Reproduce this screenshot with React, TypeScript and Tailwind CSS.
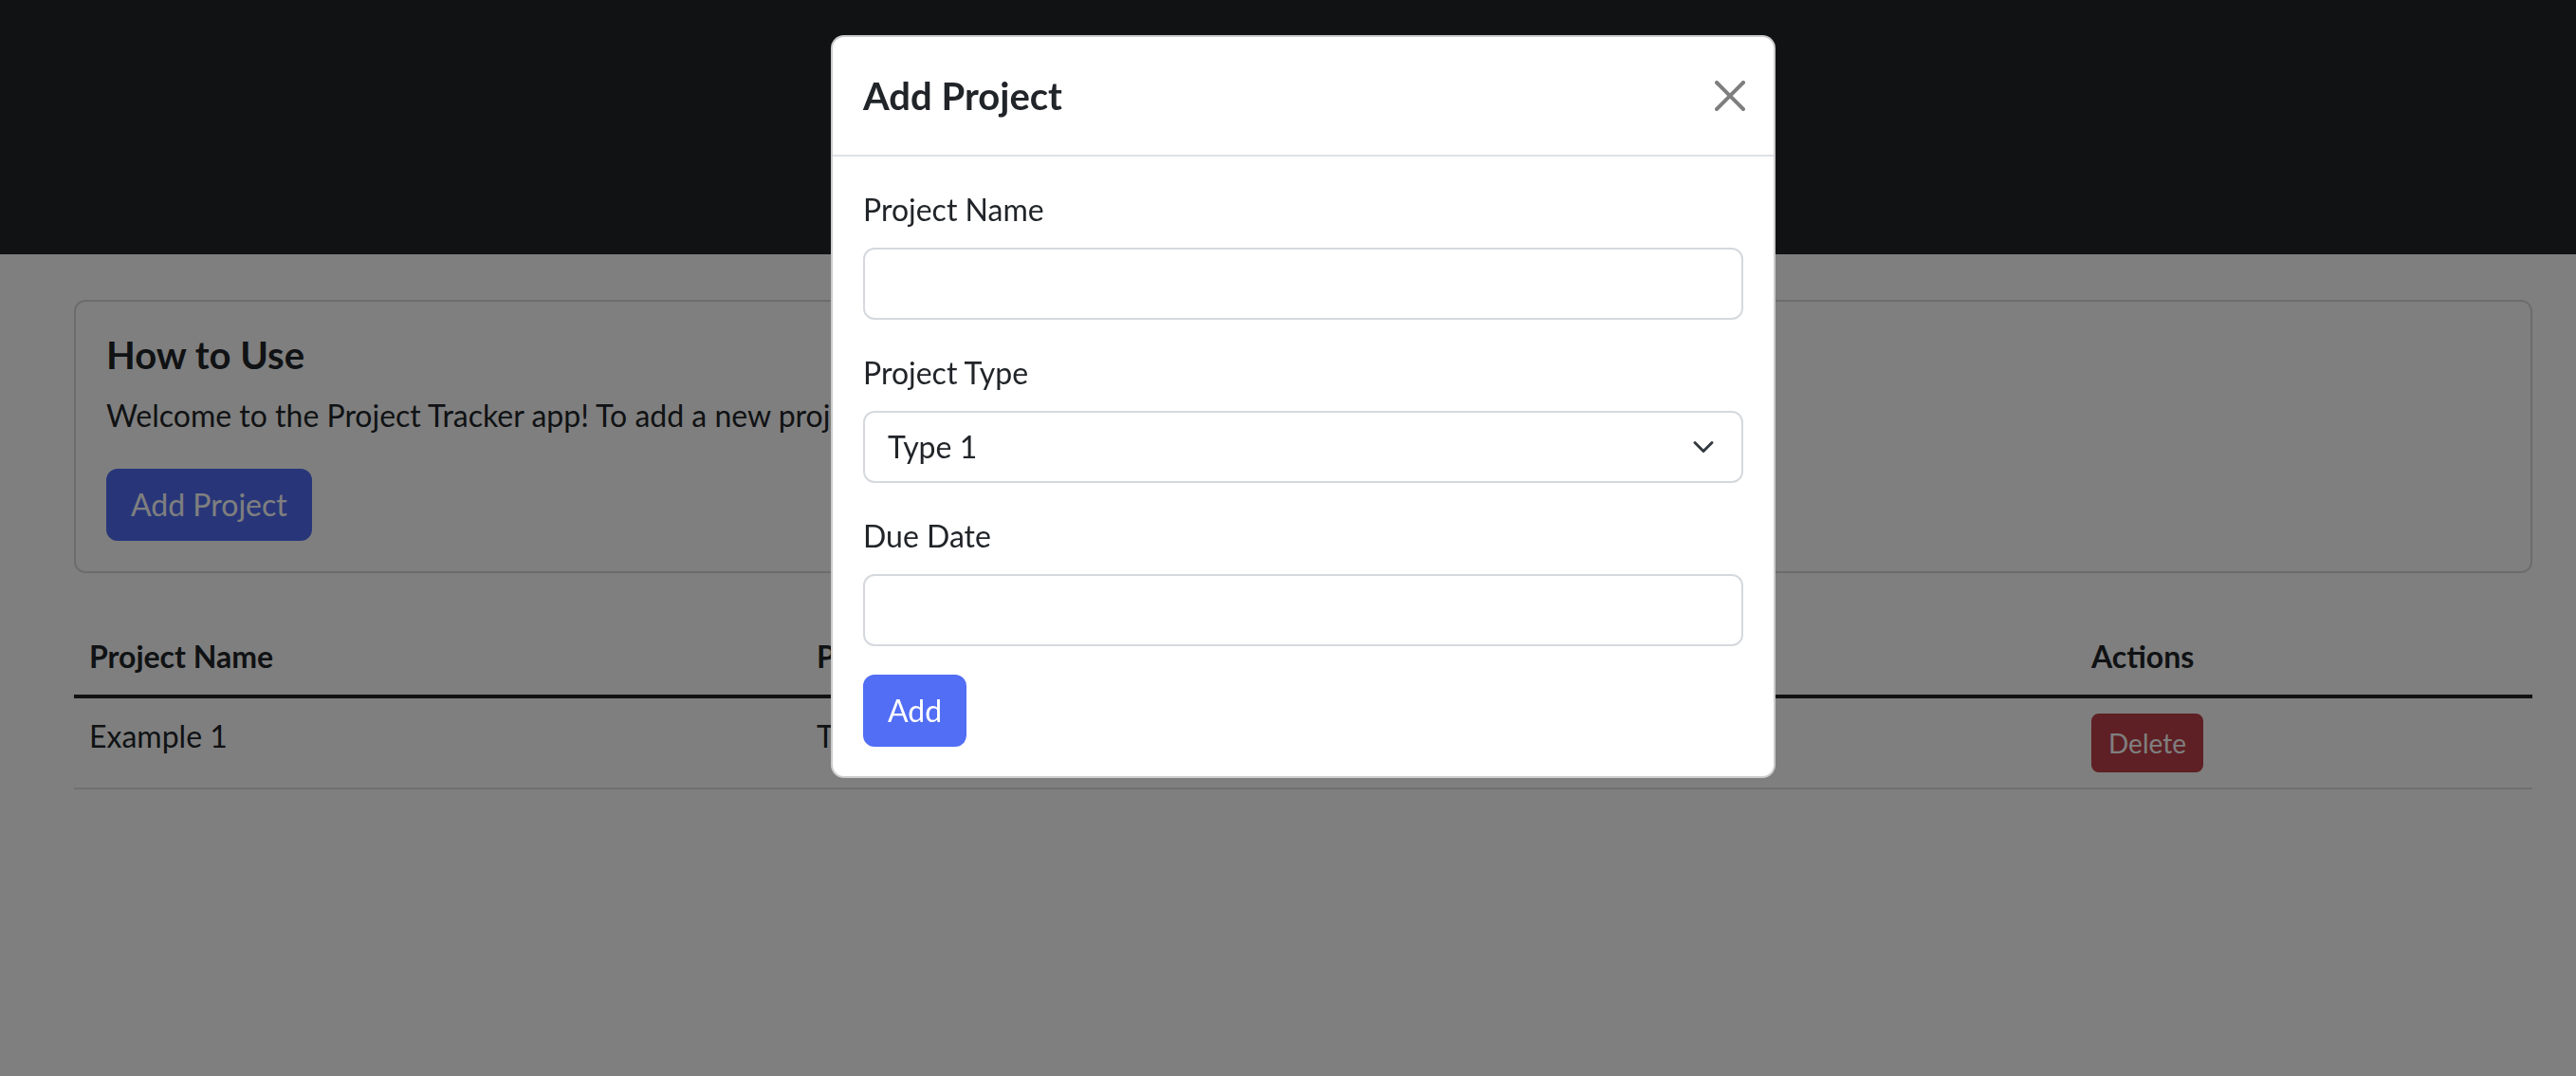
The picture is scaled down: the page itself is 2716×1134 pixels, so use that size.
// Project Tracker page with the "Add Project" modal open over a dimmed backdrop.

const FONT = { fontFamily: "Lato, 'Open Sans', sans-serif" };

const projects = [{ name: "Example 1", type: "Type 1", due: "2024-01-01" }];

function CloseIcon() {
  return (
    <svg width="32" height="32" viewBox="0 0 16 16" className="opacity-50">
      <path
        fill="#000"
        d="M.293.293a1 1 0 0 1 1.414 0L8 6.586 14.293.293a1 1 0 1 1 1.414 1.414L9.414 8l6.293 6.293a1 1 0 0 1-1.414 1.414L8 9.414l-6.293 6.293a1 1 0 0 1-1.414-1.414L6.586 8 .293 1.707a1 1 0 0 1 0-1.414z"
      />
    </svg>
  );
}

function Chevron() {
  return (
    <svg width="32" height="24" viewBox="0 0 16 16">
      <path
        d="m2 5 6 6 6-6"
        fill="none"
        stroke="#343a40"
        strokeWidth="2"
        strokeLinecap="round"
        strokeLinejoin="round"
      />
    </svg>
  );
}

function Field({ label, children }: { label: string; children: React.ReactNode }) {
  return (
    <div className="mb-[32px]">
      <label className="block text-[32px] leading-[48px] mb-[16px]">{label}</label>
      {children}
    </div>
  );
}

function AddProjectModal() {
  return (
    <div className="fixed inset-0 pl-[32px]">
      <div className="mx-auto mt-[37px] w-[996px] rounded-[14px] border-2 border-black/20 bg-white">
        {/* Header */}
        <div className="flex items-center justify-between px-[32px] py-[32px] border-b-2 border-[#dee2e6]">
          <h2 className="text-[40px] leading-[60px] font-bold">Add Project</h2>
          <button className="mr-[-2px]">
            <CloseIcon />
          </button>
        </div>

        {/* Body */}
        <div className="px-[32px] pt-[32px] pb-[31px]">
          <Field label="Project Name">
            <div className="h-[76px] w-full rounded-[12px] border-2 border-[#d5d9de]" />
          </Field>
          <Field label="Project Type">
            <div className="flex h-[76px] w-full items-center justify-between rounded-[12px] border-2 border-[#d5d9de] pl-[24px] pr-[24px]">
              <span className="text-[32px] leading-[48px]">Type 1</span>
              <Chevron />
            </div>
          </Field>
          <Field label="Due Date">
            <div className="h-[76px] w-full rounded-[12px] border-2 border-[#d5d9de]" />
          </Field>
          <button className="-mt-[2px] h-[76px] rounded-[12px] border-2 border-[#526ef4] bg-[#526ef4] px-[24px] text-[32px] leading-[48px] text-white">
            Add
          </button>
        </div>
      </div>
    </div>
  );
}

export default function App() {
  return (
    <div className="relative min-h-screen bg-white text-[#212529]" style={FONT}>
      <header className="flex h-[268px] items-center justify-center bg-[#222529] pl-[32px]">
        <h1 className="text-[48px] font-medium text-white">Project Tracker</h1>
      </header>

      <main className="pl-[32px]">
        <div className="mx-auto w-[2592px] pt-[48px]">
          {/* How to use card */}
          <div className="rounded-[12px] border-2 border-black/15 p-[32px]">
            <h5 className="mb-[16px] text-[40px] leading-[48px] font-bold">How to Use</h5>
            <p className="mb-[32px] text-[32px] leading-[48px]">
              Welcome to the Project Tracker app! To add a new project, click the "Add Project" button below.
            </p>
            <button className="h-[76px] rounded-[12px] border-2 border-[#516df2] bg-[#516df2] px-[24px] text-[32px] leading-[48px] text-white">
              Add Project
            </button>
          </div>

          {/* Projects table */}
          <table className="mt-[48px] w-full table-fixed border-collapse text-[32px] leading-[48px]">
            <colgroup>
              <col className="w-[767px]" />
              <col className="w-[672px]" />
              <col className="w-[672px]" />
              <col className="w-[481px]" />
            </colgroup>
            <thead>
              <tr className="border-b-[4px] border-[#212529] text-left">
                <th className="p-[16px] font-bold">Project Name</th>
                <th className="p-[16px] font-bold">Project Type</th>
                <th className="p-[16px] font-bold">Due Date</th>
                <th className="p-[16px] font-bold">Actions</th>
              </tr>
            </thead>
            <tbody>
              {projects.map((p) => (
                <tr key={p.name} className="border-b-2 border-[#dcdfe3]">
                  <td className="p-[16px] align-top">{p.name}</td>
                  <td className="p-[16px] align-top">{p.type}</td>
                  <td className="p-[16px] align-top">{p.due}</td>
                  <td className="p-[16px] align-top">
                    <button className="h-[62px] rounded-[8px] border-2 border-[#bc4048] bg-[#bc4048] px-[16px] text-[28px] leading-[42px] text-white">
                      Delete
                    </button>
                  </td>
                </tr>
              ))}
            </tbody>
          </table>
        </div>
      </main>

      {/* Backdrop */}
      <div className="fixed inset-0 bg-black/50" />

      <AddProjectModal />
    </div>
  );
}
